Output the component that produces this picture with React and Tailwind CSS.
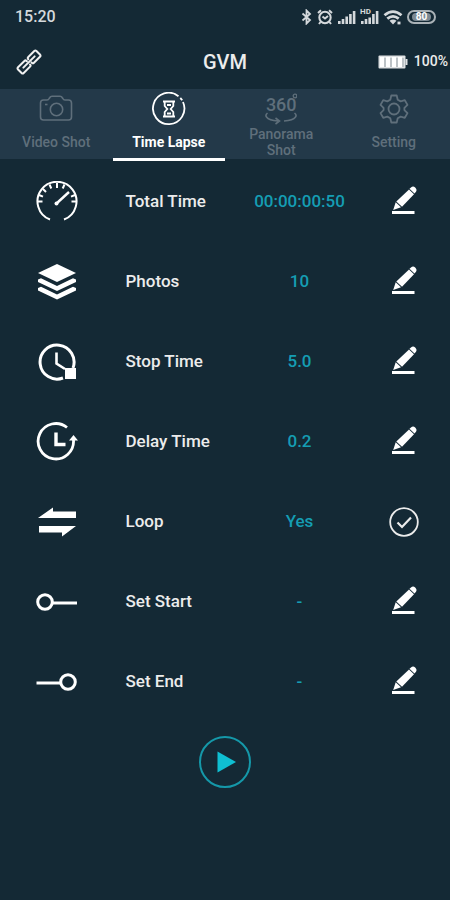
import React from 'react';

const LinkIcon = () => (
  <svg width="26" height="26" viewBox="0 0 26 26" fill="none" stroke="#f1f1f1" strokeWidth="2" strokeLinecap="round">
    <g transform="rotate(-45 13 13)">
      <path d="M12 11V10.500Q12 9 10.500 9H1.500Q0 9 0 10.500V15.500Q0 17 1.500 17H10.500Q12 17 12 15.500" />
      <path d="M14.500 15V15.500Q14.500 17 16 17H24.500Q26 17 26 15.500V10.500Q26 9 24.500 9H16Q14.500 9 14.500 10.500" />
      <path d="M5 13H21" />
    </g>
  </svg>
);

const BatteryIcon = () => (
  <svg width="30" height="14" viewBox="0 0 30 14">
    <rect x="0.5" y="0.5" width="27" height="13" rx="1" fill="#dfe2e4" />
    <path d="M27.500 4h2v6h-2z" fill="#dfe2e4" />
    <path d="M7 3v9M13 3v9M19 3v9M25 3v9" stroke="#9aa3a9" strokeWidth="1" />
    <path d="M2 2h4v10H2zM8 2h4v10H8zM14 2h4v10h-4zM20 2h4v10h-4z" fill="#fff" />
  </svg>
);

const StatusIcons = () => (
  <div className="flex items-center">
    <svg width="12" height="16" viewBox="0 0 12 16" fill="none" stroke="#d5d9dc" strokeWidth="1.8">
      <path d="M1.500 4.500L9 11L5.500 14.500V1.500L9 5L1.500 11.500" />
    </svg>
    <svg className="ml-1" width="16" height="16" viewBox="0 0 16 16" fill="none" stroke="#d5d9dc" strokeWidth="2">
      <circle cx="8" cy="8.500" r="5.700" />
      <path d="M5.500 7.500L8 9.500L11 7M1 4L4 1.300M15 4L12 1.300M3.500 13L2 15M12.500 13L14 15" />
    </svg>
    <svg className="ml-1" width="19" height="14" viewBox="0 0 19 14" fill="#d5d9dc">
      <path d="M1 11h2.600v3H1zM4.700 9h2.600v5H4.700zM8.400 6.500H11V14H8.400zM12.100 4h2.600v10h-2.600zM15.800 1h2.600v13h-2.600z" />
    </svg>
    <div className="relative ml-1">
      <svg width="19" height="14" viewBox="0 0 19 14" fill="#d5d9dc">
        <path d="M1 11h2.600v3H1zM4.700 9h2.600v5H4.700zM8.400 7.500H11V14H8.400zM12.100 4h2.600v10h-2.600zM15.800 1h2.600v13h-2.600z" />
      </svg>
      <span className="absolute left-0 -top-0.5 text-[8px] leading-[8px] font-bold text-[#d5d9dc]">HD</span>
    </div>
    <svg className="ml-1" width="20" height="15" viewBox="0 0 20 15" fill="none" stroke="#d5d9dc" strokeWidth="2.800">
      <path d="M1.500 5.200Q10 -2 18.500 5.200M4.300 8.700Q10 4 15.700 8.700" />
      <path d="M6.500 10.800Q10 8.300 13.500 10.800L10 14.500z" fill="#d5d9dc" stroke="none" />
      <path d="M14.500 13h3" />
    </svg>
    <span className="ml-1 flex h-[14px] w-[29px] items-center justify-center rounded-full border-2 border-[#aab2b7]">
      <span className="rounded-sm bg-[#7d8a93] px-1 text-[10px] leading-[8px] font-bold text-white">80</span>
    </span>
  </div>
);

const CameraIcon = () => (
  <svg width="34" height="28" viewBox="0 0 34 28" fill="none" stroke="currentColor" strokeWidth="1.600">
    <path d="M1.500 8Q1.500 5 4.500 5H8Q9.500 5 10.200 3.500L10.800 2.500Q11.500 1.200 13 1.200H21Q22.500 1.200 23.200 2.500L23.800 3.500Q24.500 5 26 5H29.500Q32.500 5 32.500 8V22Q32.500 25 29.500 25H4.500Q1.500 25 1.500 22Z" />
    <circle cx="17.500" cy="14.500" r="6.200" />
    <path d="M6 9.500h2.500" />
  </svg>
);

const HourglassIcon = () => (
  <svg width="34" height="34" viewBox="0 0 34 34" fill="none" stroke="currentColor" strokeWidth="1.800">
    <path d="M26.500 4.200A15.700 15.700 0 1 0 31 10M30.200 8.300A15.700 15.700 0 0 0 28.300 6" />
    <path d="M11 9.500h12M11 24.500h12M12.700 9.500v4.500L15.300 17L12.700 20V24.500M21.300 9.500v4.500L18.700 17L21.300 20V24.500" />
    <path d="M15 21.500h4M15 13h4" />
  </svg>
);

const PanoramaIcon = () => (
  <div className="relative flex h-8 w-8 flex-col items-center">
    <span className="text-[18px] leading-6 font-medium">360</span>
    <svg className="absolute inset-0" width="32" height="32" viewBox="0 0 32 32" fill="none" stroke="currentColor" strokeWidth="1.600">
      <circle cx="30" cy="3" r="1.800" strokeWidth="1.300" />
      <path d="M2.500 20Q0 22 1.500 24Q4 27.500 13 28M10.500 25l4 3l-4 3M19 28Q28 27.500 30.500 24Q32 22 29.500 20" />
    </svg>
  </div>
);

const GearIcon = () => (
  <svg width="30" height="30" viewBox="0 0 30 30" fill="none" stroke="currentColor" strokeWidth="1.800" strokeLinejoin="round">
    <path d="M12.300 1.500h5.400l1 4.200l3 1.700l4.100-1.200l2.700 4.700l-3.100 3v2.200l3.100 3l-2.700 4.700l-4.100-1.200l-3 1.700l-1 4.200h-5.400l-1-4.200l-3-1.700l-4.100 1.200l-2.700-4.700l3.100-3v-2.200l-3.100-3l2.700-4.700l4.100 1.200l3-1.700z" />
    <circle cx="15" cy="15" r="5.500" />
  </svg>
);

const GaugeIcon = () => (
  <svg width="42" height="42" viewBox="0 0 42 42" fill="none" stroke="#fff" strokeWidth="2">
    <path d="M14 38.500A19.500 19.500 0 1 1 28 38.500" />
    <path d="M21 2v5M13.500 3.500l1.800 4M28.500 3.500l-1.800 4M7 8l3 3M3 14l4 1.700M1.500 20.500h5M40.500 20.500h-5M39 14l-4 1.700" />
    <path d="M20.500 22.500L33 11" strokeWidth="2.400" />
    <circle cx="20.500" cy="22.500" r="2" fill="#fff" stroke="none" />
  </svg>
);

const LayersIcon = () => (
  <svg width="42" height="38" viewBox="0 0 42 38" fill="#fff">
    <path d="M21 1L40 10L21 19L2 10z" />
    <path d="M2 16.500L5 15.200L21 23L37 15.200L40 16.500V19L21 28L2 19z" />
    <path d="M2 25L5 23.700L21 31.500L37 23.700L40 25V27.500L21 36.500L2 27.500z" />
  </svg>
);

const StopTimeIcon = () => (
  <svg width="40" height="40" viewBox="0 0 40 40" fill="none" stroke="#fff" strokeWidth="3">
    <path d="M36 26A17 17 0 1 0 26 36" />
    <path d="M19.500 10.500V21.500L28 27" strokeWidth="2.600" />
    <path d="M28 26h11v11H28z" fill="#fff" stroke="none" />
  </svg>
);

const DelayIcon = () => (
  <svg width="42" height="42" viewBox="0 0 42 42" fill="none" stroke="#fff" strokeWidth="2.800">
    <path d="M31 6.500A17.700 17.700 0 1 0 37.500 19" />
    <path d="M33 19.500L37.500 14L42 19.500z" fill="#fff" stroke="none" />
    <path d="M20 11.500V23.500H29.500" strokeWidth="3.400" />
  </svg>
);

const LoopIcon = () => (
  <svg width="40" height="32" viewBox="0 0 40 32" fill="#fff">
    <path d="M1 12L16 1.500V5.500H39V12z" />
    <path d="M39 20L25 30.500V26.500H2V20z" />
  </svg>
);

const StartIcon = () => (
  <svg width="42" height="20" viewBox="0 0 42 20" fill="none" stroke="#fff" strokeWidth="3">
    <circle cx="9" cy="10" r="7.300" />
    <path d="M16.500 11H41" />
  </svg>
);

const EndIcon = () => (
  <svg width="42" height="20" viewBox="0 0 42 20" fill="none" stroke="#fff" strokeWidth="3">
    <circle cx="32" cy="10" r="7.300" />
    <path d="M0.500 11H24.500" />
  </svg>
);

const PencilIcon = () => (
  <svg width="28" height="34" viewBox="0 0 28 34" fill="#fff">
    <path d="M21 2.500Q23 0.500 25.200 2.500Q27.500 4.800 25.800 7L24.500 8.500L19.500 3.800z" />
    <path d="M19 4.500L24 9.200L12 21.800L6.300 16.500z" />
    <path d="M5.700 17.300L11 22.300L3.200 25z" />
    <path d="M2 26h22.500v3H2z" />
  </svg>
);

const CheckCircleIcon = () => (
  <svg width="30" height="30" viewBox="0 0 30 30" fill="none" stroke="#ececec" strokeWidth="1.800">
    <circle cx="15" cy="15" r="13.800" />
    <path d="M8.500 15.500L13 20L22 10.500" strokeWidth="2.200" />
  </svg>
);

const tabs = [
  { label: 'Video Shot', icon: <CameraIcon /> },
  { label: 'Time Lapse', icon: <HourglassIcon />, active: true },
  { label: 'Panorama Shot', icon: <PanoramaIcon /> },
  { label: 'Setting', icon: <GearIcon /> },
];

const rows = [
  { label: 'Total Time', value: '00:00:00:50', icon: <GaugeIcon /> },
  { label: 'Photos', value: '10', icon: <LayersIcon /> },
  { label: 'Stop Time', value: '5.0', icon: <StopTimeIcon /> },
  { label: 'Delay Time', value: '0.2', icon: <DelayIcon /> },
  { label: 'Loop', value: 'Yes', icon: <LoopIcon />, toggle: true },
  { label: 'Set Start', value: '-', icon: <StartIcon /> },
  { label: 'Set End', value: '-', icon: <EndIcon /> },
];

const App = () => {
  return (
    <div className="min-h-screen bg-[#142935] font-['Roboto',sans-serif] text-[#ececec]">
      <div className="flex h-[34px] items-center justify-between pl-[15px] pr-[14px]">
        <span className="text-[16px] font-medium text-[#d5d9dc]">15:20</span>
        <StatusIcons />
      </div>

      <header className="grid h-[55px] grid-cols-[1fr_auto_1fr] items-center pl-4">
        <button type="button" aria-label="Connection" className="justify-self-start">
          <LinkIcon />
        </button>
        <h1 className="pr-4 text-[20px] font-medium">GVM</h1>
        <div className="flex items-center gap-1.5 justify-self-end pr-0.5">
          <BatteryIcon />
          <span className="text-[14px] font-medium">100%</span>
        </div>
      </header>

      <nav className="grid h-[70px] grid-cols-4 bg-[#233949]">
        {tabs.map((tab) => (
          <button
            key={tab.label}
            type="button"
            className={
              tab.active
                ? 'flex flex-col items-center border-b-[3px] border-white pt-0.5 text-white'
                : 'flex flex-col items-center border-b-[3px] border-transparent pt-0.5 text-[#5f6f7b]'
            }
          >
            <span className="flex h-[35px] items-center">{tab.icon}</span>
            <span
              className={
                tab.active
                  ? 'flex h-8 w-20 items-center justify-center text-[14px] leading-4 font-bold'
                  : 'flex h-8 w-20 items-center justify-center text-[14px] leading-4 font-medium'
              }
            >
              {tab.label}
            </span>
          </button>
        ))}
      </nav>

      <main>
        <ul className="pt-[3px]">
          {rows.map((row) => (
            <li key={row.label} className="grid h-20 grid-cols-[25%_1fr_26%_92px] items-center">
              <span className="flex justify-center pl-0.5">{row.icon}</span>
              <span className="pl-[13px] text-[17px] font-medium">{row.label}</span>
              <span className="text-center text-[17px] font-medium text-[#159db3]">{row.value}</span>
              <button type="button" aria-label={row.label} className="flex justify-center">
                {row.toggle ? <CheckCircleIcon /> : <PencilIcon />}
              </button>
            </li>
          ))}
        </ul>

        <div className="flex justify-center pt-[14px]">
          <button type="button" aria-label="Start">
            <svg width="52" height="52" viewBox="0 0 52 52">
              <circle cx="26" cy="26" r="25" fill="none" stroke="#1598a9" strokeWidth="2" />
              <path d="M18.500 15.500L37 26L18.500 36.500z" fill="#0fbfd2" />
            </svg>
          </button>
        </div>
      </main>
    </div>
  );
};

export default App;
